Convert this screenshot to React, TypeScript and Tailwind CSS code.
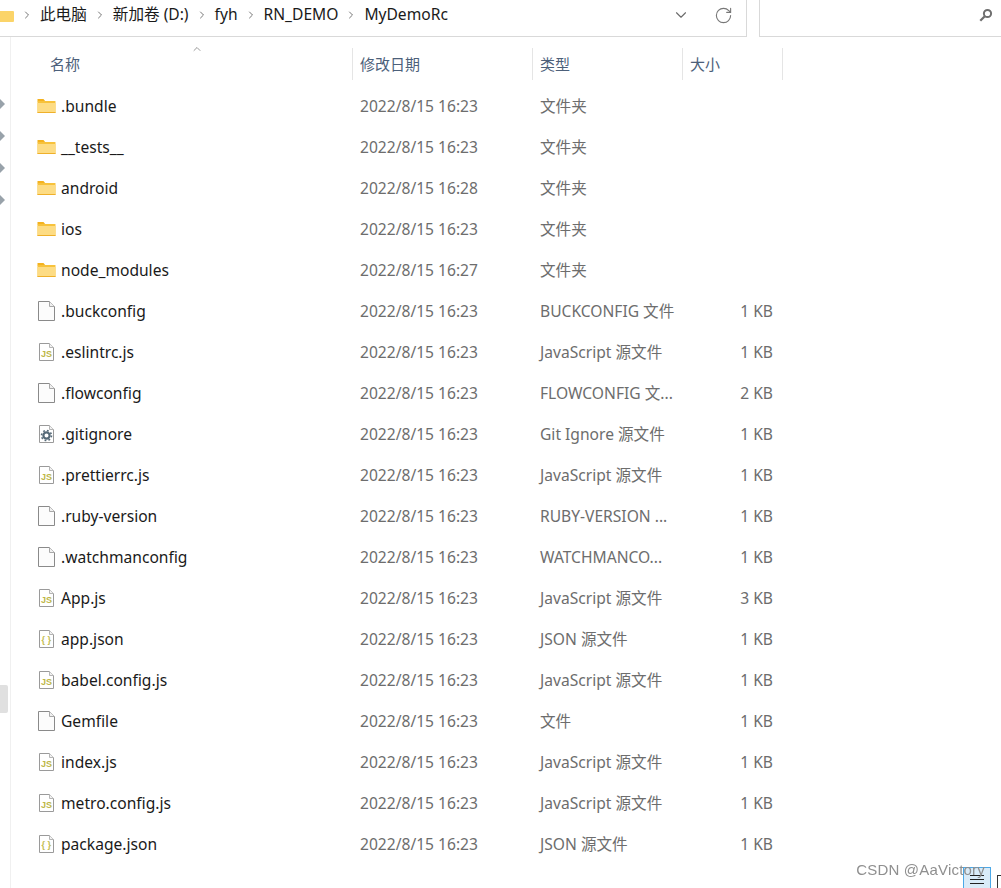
import { ChevronRight, ChevronDown, ChevronUp, RotateCw } from "lucide-react";

type Kind = "folder" | "blank" | "js" | "gear" | "json";

type Row = { name: string; date: string; type: string; size: string; kind: Kind };

const d = "2022/8/15 16:23";

const rows: Row[] = [
  { name: ".bundle", date: d, type: "文件夹", size: "", kind: "folder" },
  { name: "__tests__", date: d, type: "文件夹", size: "", kind: "folder" },
  { name: "android", date: "2022/8/15 16:28", type: "文件夹", size: "", kind: "folder" },
  { name: "ios", date: d, type: "文件夹", size: "", kind: "folder" },
  { name: "node_modules", date: "2022/8/15 16:27", type: "文件夹", size: "", kind: "folder" },
  { name: ".buckconfig", date: d, type: "BUCKCONFIG 文件", size: "1 KB", kind: "blank" },
  { name: ".eslintrc.js", date: d, type: "JavaScript 源文件", size: "1 KB", kind: "js" },
  { name: ".flowconfig", date: d, type: "FLOWCONFIG 文...", size: "2 KB", kind: "blank" },
  { name: ".gitignore", date: d, type: "Git Ignore 源文件", size: "1 KB", kind: "gear" },
  { name: ".prettierrc.js", date: d, type: "JavaScript 源文件", size: "1 KB", kind: "js" },
  { name: ".ruby-version", date: d, type: "RUBY-VERSION ...", size: "1 KB", kind: "blank" },
  { name: ".watchmanconfig", date: d, type: "WATCHMANCO...", size: "1 KB", kind: "blank" },
  { name: "App.js", date: d, type: "JavaScript 源文件", size: "3 KB", kind: "js" },
  { name: "app.json", date: d, type: "JSON 源文件", size: "1 KB", kind: "json" },
  { name: "babel.config.js", date: d, type: "JavaScript 源文件", size: "1 KB", kind: "js" },
  { name: "Gemfile", date: d, type: "文件", size: "1 KB", kind: "blank" },
  { name: "index.js", date: d, type: "JavaScript 源文件", size: "1 KB", kind: "js" },
  { name: "metro.config.js", date: d, type: "JavaScript 源文件", size: "1 KB", kind: "js" },
  { name: "package.json", date: d, type: "JSON 源文件", size: "1 KB", kind: "json" },
];

const crumbs = ["此电脑", "新加卷 (D:)", "fyh", "RN_DEMO", "MyDemoRc"];

function FolderIcon() {
  return (
    <svg width="19" height="16" viewBox="0 0 19 16" className="shrink-0">
      <path d="M0.5 1h6l2 2.5h-8z" fill="#f4b21f" />
      <rect x="0.5" y="3" width="18" height="12" rx="0.5" fill="#f7c23c" />
      <rect x="0.5" y="5" width="18" height="9.5" fill="#fddc84" />
      <rect x="0.5" y="14" width="18" height="1" fill="#efb02a" />
    </svg>
  );
}

function FileIcon({ kind }: { kind: Kind }) {
  const small = kind !== "blank";
  return (
    <svg
      width={small ? 15 : 17}
      height={small ? 18 : 20}
      viewBox={small ? "0 0 15 18" : "0 0 17 20"}
      className="shrink-0"
    >
      {small ? (
        <>
          <path d="M0.5 0.5h10l4 4v13h-14z" fill="#fff" stroke="#9a9a9a" />
          <path d="M10.5 0.5v4h4" fill="#f2f2f2" stroke="#b5b5b5" />
        </>
      ) : (
        <>
          <path d="M0.5 0.5h11l5 5v14h-16z" fill="#fcfcfc" stroke="#8a8a8a" />
          <path d="M11.5 0.5v5h5" fill="#f0f0f0" stroke="#a8a8a8" />
        </>
      )}
      {kind === "js" && (
        <text x="2" y="13.5" fontSize="9" fontWeight="700" fontFamily="Liberation Sans" fill="#bdb647">
          JS
        </text>
      )}
      {kind === "json" && (
        <text x="2.6" y="13" fontSize="9" fontWeight="700" fontFamily="Liberation Sans" fill="#c2bb4e">
          {"{ }"}
        </text>
      )}
      {kind === "gear" && (
        <g transform="translate(7.5 10.5)">
          <circle r="3.1" fill="none" stroke="#566a78" strokeWidth="2.2" />
          <circle r="5" fill="none" stroke="#566a78" strokeWidth="1.6" strokeDasharray="1.8 2.1" />
        </g>
      )}
    </svg>
  );
}

function Expander() {
  return <div className="h-0 w-0 border-y-[5px] border-l-[5px] border-y-transparent border-l-[#98a2aa]" />;
}

export default function App() {
  return (
    <div
      className="h-[888px] w-[1001px] overflow-hidden bg-white text-[15.6px] text-[#1a1a1a]"
      style={{ fontFamily: '"Noto Sans", "Noto Sans CJK SC", sans-serif' }}
    >
      {/* address and search boxes */}
      <div className="flex h-[37px] items-stretch">
        <div className="flex w-[747px] items-center border-r border-b border-[#d9d9d9] pb-[6px]">
          <div className="ml-[-7px] flex h-[14px] w-[21px] items-end">
            <div className="h-[11px] w-full rounded-[1px] bg-[#fbd469]" />
          </div>
          {crumbs.map((c) => (
            <div key={c} className="flex items-center">
              <ChevronRight className="mx-[7px] h-[12px] w-[12px] text-[#777]" strokeWidth={2} />
              <span className="whitespace-nowrap">{c}</span>
            </div>
          ))}
          <ChevronDown className="mr-[24px] ml-auto h-[18px] w-[18px] text-[#6b6b6b]" strokeWidth={1.5} />
          <RotateCw className="mr-[13px] h-[19px] w-[19px] text-[#777]" strokeWidth={1.4} />
        </div>
        <div className="ml-[12px] flex flex-1 items-center justify-end border-b border-l border-[#d9d9d9] pr-[8px] pb-[6px]">
          <svg width="14" height="14" viewBox="0 0 14 14">
            <circle cx="8.5" cy="5.5" r="3.6" fill="none" stroke="#6f6f6f" strokeWidth="2" />
            <path d="M5.8 8.2L1.3 12.7" stroke="#6f6f6f" strokeWidth="2.2" />
          </svg>
        </div>
      </div>

      <div className="flex">
        {/* collapsed nav pane */}
        <div className="flex h-[851px] w-[11px] flex-col border-r border-[#f0f0f0]">
          <div className="flex flex-col gap-[22px] pt-[62px]">
            <Expander />
            <Expander />
            <Expander />
            <Expander />
          </div>
          <div className="mt-[480px] h-[28px] w-[8px] rounded-r-[2px] bg-[#e0e0e0]" />
        </div>

        <div className="min-w-0 flex-1">
          {/* column headers */}
          <div className="relative mt-[11px] flex h-[32px] items-center text-[15px] text-[#4c607a]">
            <ChevronUp className="absolute top-[-5px] left-[180px] h-[12px] w-[12px] text-[#777]" strokeWidth={1.5} />
            <div className="flex h-full w-[342px] items-center border-r border-[#e5e5e5] pl-[39px]">名称</div>
            <div className="flex h-full w-[180px] items-center border-r border-[#e5e5e5] pl-[7px]">修改日期</div>
            <div className="flex h-full w-[150px] items-center border-r border-[#e5e5e5] pl-[7px]">类型</div>
            <div className="flex h-full w-[100px] items-center border-r border-[#e5e5e5] pl-[7px]">大小</div>
          </div>

          {/* file rows */}
          <div className="pt-[6px]">
            {rows.map((r) => (
              <div key={r.name} className="flex h-[41px] items-center">
                <div className="flex w-[342px] items-center">
                  <div className="flex w-[50px] shrink-0 justify-center pl-[20px]">
                    {r.kind === "folder" ? <FolderIcon /> : <FileIcon kind={r.kind} />}
                  </div>
                  <span className="whitespace-nowrap">{r.name}</span>
                </div>
                <div className="w-[180px] pl-[7px] whitespace-nowrap text-[#6d6d6d]">{r.date}</div>
                <div className="w-[150px] pl-[7px] whitespace-nowrap text-[#6d6d6d]">{r.type}</div>
                <div className="w-[100px] pr-[10px] text-right whitespace-nowrap text-[#6d6d6d]">{r.size}</div>
              </div>
            ))}
          </div>
        </div>
      </div>

      {/* bottom-right view toggles, with the watermark over them */}
      <div className="fixed right-[-2px] bottom-0 flex items-end">
        <div className="flex h-[21px] w-[28px] flex-col items-center justify-center gap-[3px] border border-b-0 border-[#4aa8e8] bg-[#d9ebf8] pt-[2px]">
          <div className="h-px w-[14px] bg-[#222]" />
          <div className="h-px w-[14px] bg-[#222]" />
          <div className="h-px w-[14px] bg-[#222]" />
        </div>
        <div className="ml-[6px] h-[13px] w-[6px] border border-b-0 border-[#333]" />
      </div>
      <div
        className="fixed right-[16px] bottom-[7px] text-[15px] tracking-[0.2px] text-[#8f8f8f]"
        style={{ fontFamily: '"Liberation Sans", sans-serif' }}
      >
        CSDN @AaVictory
      </div>
    </div>
  );
}
